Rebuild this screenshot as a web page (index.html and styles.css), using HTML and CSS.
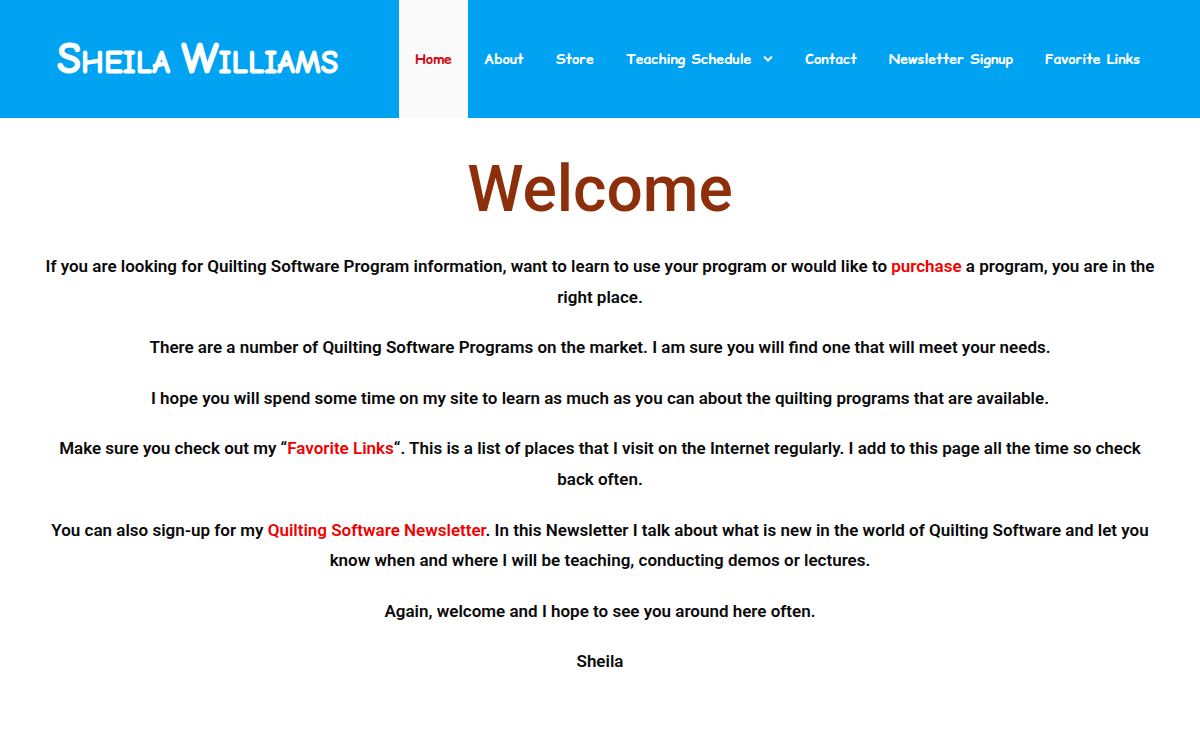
FILE: index.html
```
<!DOCTYPE html>
<html lang="en">
<head>
<meta charset="utf-8">
<meta name="viewport" content="width=device-width, initial-scale=1">
<title>Sheila Williams</title>
<link rel="stylesheet" href="styles.css">
</head>
<body>
<header class="site-header">
  <a class="site-title" href="#"><span class="cap">S</span>heila <span class="cap">W</span>illiams</a>
  <nav class="main-nav" aria-label="Primary">
    <a class="nav-link nav-link-current" href="#" aria-current="page">Home</a>
    <a class="nav-link" href="#">About</a>
    <a class="nav-link" href="#">Store</a>
    <a class="nav-link" href="#">Teaching Schedule
      <svg class="chevron" viewBox="0 0 10 8" aria-hidden="true"><path d="M1 1.5 5 5.5 9 1.5"/></svg></a>
    <a class="nav-link" href="#">Contact</a>
    <a class="nav-link" href="#">Newsletter Signup</a>
    <a class="nav-link" href="#">Favorite Links</a>
  </nav>
</header>
<main class="content">
  <h1 class="headline">Welcome</h1>
  <p>If you are looking for Quilting Software Program information, want to learn to use your program or would like to <a href="#">purchase</a> a program, you are in the right place.</p>
  <p>There are a number of Quilting Software Programs on the market. I am sure you will find one that will meet your needs.</p>
  <p>I hope you will spend some time on my site to learn as much as you can about the quilting programs that are available.</p>
  <p>Make sure you check out my “<a href="#">Favorite Links</a>“. This is a list of places that I visit on the Internet regularly. I add to this page all the time so check back often.</p>
  <p>You can also sign-up for my <a href="#">Quilting Software Newsletter</a>. In this Newsletter I talk about what is new in the world of Quilting Software and let you know when and where I will be teaching, conducting demos or lectures.</p>
  <p>Again, welcome and I hope to see you around here often.</p>
  <p>Sheila</p>
</main>
</body>
</html>
```
FILE: styles.css
```
* { box-sizing: border-box; }
body {
  margin: 0;
  background: #fff;
  color: #0a0a0a;
  font: 600 17px/1.8 Roboto, sans-serif;
}
a { color: #f00000; text-decoration: none; }
.site-header {
  display: flex;
  justify-content: space-between;
  align-items: stretch;
  min-height: 118px;
  padding: 0 44px 0 57px;
  background: #00a2f2;
}
.site-title {
  align-self: center;
  color: #fff;
  font: 700 32px/1 "Rock Salt", "Permanent Marker", "Comic Neue", cursive;
  text-transform: uppercase;
  white-space: nowrap;
  -webkit-text-stroke: 1px #fff;
}
.site-title .cap { font-size: 44px; }
.main-nav { display: flex; }
.nav-link {
  display: flex;
  align-items: center;
  gap: 12px;
  padding: 0 16px;
  color: #fff;
  font: 700 14px/1 "Comic Sans MS", "Comic Relief", "Comic Neue", cursive;
  white-space: nowrap;
}
.nav-link-current { background: #fafafa; color: #d00f1b; }
.chevron { width: 10px; height: 8px; fill: none; stroke: currentColor; stroke-width: 2; }
.content { padding: 40px 40px; text-align: center; }
.headline {
  margin: 0 0 29px;
  color: #8e2f0c;
  font: 500 64px/1 Roboto, sans-serif;
}
.content p { margin: 0 0 20px; }
```
